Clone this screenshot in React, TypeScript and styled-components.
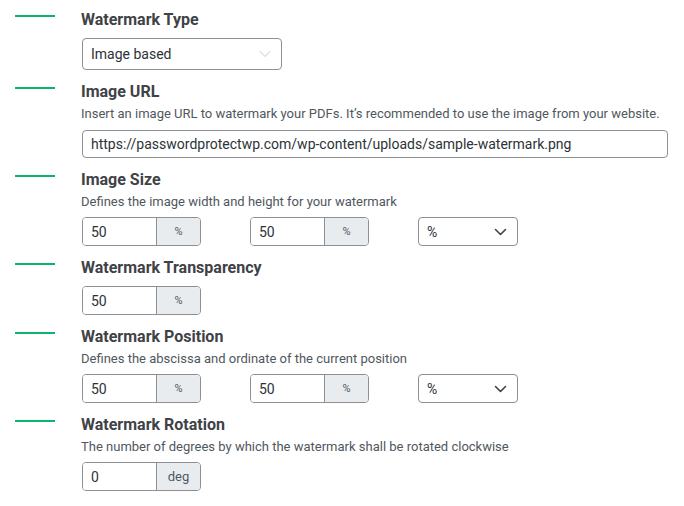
import React from 'react';
import styled, { createGlobalStyle } from 'styled-components';

const GlobalStyle = createGlobalStyle`
  html, body { margin: 0; padding: 0; background: #fff; }
  body { font-family: Roboto, "Liberation Sans", sans-serif; color: #3c434a; }
  * { box-sizing: border-box; }
`;

const Page = styled.div`
  display: flex;
  flex-direction: column;
  gap: 10px;
  padding: 8px 0 0 15px;
  width: 684px;
`;

const Section = styled.section`
  display: grid;
  grid-template-columns: 40px 1fr;
  column-gap: 26px;
  align-items: start;
`;

const Marker = styled.div`
  width: 40px;
  height: 2px;
  background: #0bb56e;
  margin-top: 7px;
`;

const Body = styled.div`
  display: flex;
  flex-direction: column;
`;

const Title = styled.h3`
  margin: 0;
  font-size: 16px;
  font-weight: 700;
  line-height: 24px;
  color: #3f4246;
`;

const Desc = styled.p`
  margin: 0 0 5px;
  font-size: 13px;
  line-height: 20px;
  color: #50575e;
`;

const Fields = styled.div<{ $top?: number }>`
  display: flex;
  align-items: center;
  gap: 49px;
  margin: ${p => p.$top ?? 0}px 0 0 1px;
`;

const Group = styled.div`
  display: flex;
  width: 119px;
  height: 29px;
  border: 1px solid #8c8f94;
  border-radius: 4px;
  overflow: hidden;
`;

const NumInput = styled.input`
  width: 73px;
  border: 0;
  outline: 0;
  padding: 0 8px;
  font: 14px Roboto, "Liberation Sans", sans-serif;
  color: #2c3338;
  background: #fff;
`;

const Addon = styled.span<{ $small?: boolean }>`
  flex: 1;
  display: flex;
  align-items: center;
  justify-content: center;
  background: #e9ecef;
  border-left: 1px solid #8c8f94;
  font-size: ${p => (p.$small ? 11 : 13)}px;
  color: #50575e;
`;

const SelectBox = styled.div<{ $w: number; $h: number }>`
  display: flex;
  align-items: center;
  justify-content: space-between;
  width: ${p => p.$w}px;
  height: ${p => p.$h}px;
  border: 1px solid #8c8f94;
  border-radius: 4px;
  padding: 0 10px 0 8px;
  font-size: 14px;
  color: #2c3338;
  background: #fff;
`;

const TextInput = styled.input`
  width: 586px;
  height: 28px;
  border: 1px solid #8c8f94;
  border-radius: 4px;
  padding: 0 8px;
  outline: 0;
  font: 14px Roboto, "Liberation Sans", sans-serif;
  color: #2c3338;
  margin: 1px 0 0 1px;
`;

const Chevron = ({ light }: { light?: boolean }) => (
  <svg width={light ? 12 : 13} height="8" viewBox="0 0 12 8">
    <path
      d="M1 1.5l5 5 5-5"
      fill="none"
      stroke={light ? '#c3c6ca' : '#3c434a'}
      strokeWidth={light ? 1 : 1.6}
      strokeLinecap="round"
      strokeLinejoin="round"
    />
  </svg>
);

const Unit = ({ value, unit }: { value: string; unit: string }) => (
  <Group>
    <NumInput defaultValue={value} />
    <Addon $small={unit === '%'}>{unit}</Addon>
  </Group>
);

const PercentSelect = () => (
  <SelectBox $w={100} $h={29}>
    <span>%</span>
    <Chevron />
  </SelectBox>
);

export default function App() {
  return (
    <>
      <GlobalStyle />
      <Page>
        <Section>
          <Marker />
          <Body>
            <Title>Watermark Type</Title>
            <Fields $top={6}>
              <SelectBox $w={200} $h={32}>
                <span>Image based</span>
                <Chevron light />
              </SelectBox>
            </Fields>
          </Body>
        </Section>

        <Section>
          <Marker />
          <Body>
            <Title>Image URL</Title>
            <Desc>Insert an image URL to watermark your PDFs. It’s recommended to use the image from your website.</Desc>
            <TextInput defaultValue="https://passwordprotectwp.com/wp-content/uploads/sample-watermark.png" />
          </Body>
        </Section>

        <Section>
          <Marker />
          <Body>
            <Title>Image Size</Title>
            <Desc>Defines the image width and height for your watermark</Desc>
            <Fields>
              <Unit value="50" unit="%" />
              <Unit value="50" unit="%" />
              <PercentSelect />
            </Fields>
          </Body>
        </Section>

        <Section>
          <Marker />
          <Body>
            <Title>Watermark Transparency</Title>
            <Fields $top={6}>
              <Unit value="50" unit="%" />
            </Fields>
          </Body>
        </Section>

        <Section>
          <Marker />
          <Body>
            <Title>Watermark Position</Title>
            <Desc>Defines the abscissa and ordinate of the current position</Desc>
            <Fields>
              <Unit value="50" unit="%" />
              <Unit value="50" unit="%" />
              <PercentSelect />
            </Fields>
          </Body>
        </Section>

        <Section>
          <Marker />
          <Body>
            <Title>Watermark Rotation</Title>
            <Desc>The number of degrees by which the watermark shall be rotated clockwise</Desc>
            <Fields>
              <Unit value="0" unit="deg" />
            </Fields>
          </Body>
        </Section>
      </Page>
    </>
  );
}
